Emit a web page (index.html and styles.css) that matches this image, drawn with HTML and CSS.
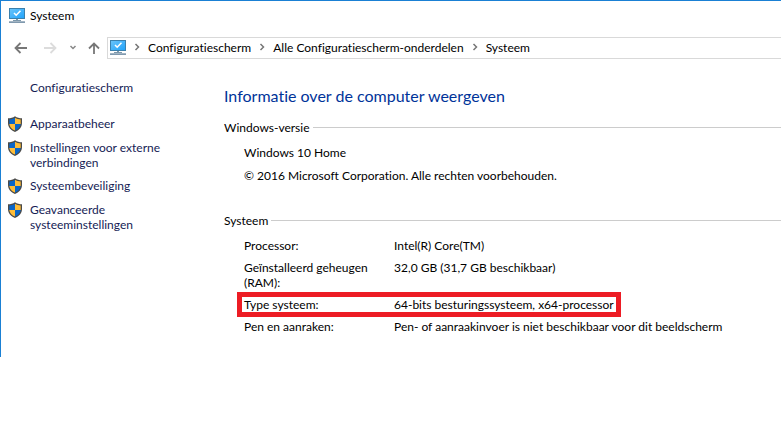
FILE: index.html
```html
<!DOCTYPE html>
<html lang="nl">
<head>
<meta charset="utf-8">
<title>Systeem</title>
<link rel="stylesheet" href="styles.css">
</head>
<body>
<svg class="defs" aria-hidden="true">
  <defs>
    <linearGradient id="screen" x1="0" y1="0" x2="1" y2="1">
      <stop offset="0" stop-color="#6cc5fa"/>
      <stop offset="1" stop-color="#1ea2fb"/>
    </linearGradient>
    <symbol id="monitor" viewBox="0 0 16 15">
      <rect x=".5" y=".5" width="15" height="10" fill="url(#screen)" stroke="#3a80ad"/>
      <path d="M5 5l2.200 2.200L11.500 2.800" fill="none" stroke="#fff" stroke-width="1.600"/>
      <path d="M7 11h2v1h3v1H4v-1h3z" fill="#7c97aa"/>
      <path d="M0 13.500h16" stroke="#a3b5c4" stroke-width="1"/>
      <path d="M0 14.500h16" stroke="#8099ae" stroke-width="1"/>
    </symbol>
    <symbol id="shield" viewBox="0 0 14 16">
      <path d="M7 .2C5 1.600 2.700 2.200 0 2.200V7c0 4.200 2.900 7.200 7 8.900 4.100-1.700 7-4.700 7-8.900V2.200C11.300 2.200 9 1.600 7 .2z" fill="#4a4a48"/>
      <path d="M7 1.800C5.300 2.800 3.400 3.300 1.300 3.400V8H7z" fill="#0a66c8"/>
      <path d="M7 1.800c1.700 1 3.600 1.500 5.700 1.600V8H7z" fill="#ffbd38"/>
      <path d="M1.300 8c.3 3 2.500 5.200 5.700 6.600V8z" fill="#ffbd38"/>
      <path d="M12.700 8c-.3 3-2.500 5.200-5.700 6.600V8z" fill="#0a66c8"/>
    </symbol>
    <symbol id="chevron" viewBox="0 0 6 8">
      <path d="M1.500 1l3 3-3 3" fill="none" stroke="#777" stroke-width="1.500"/>
    </symbol>
  </defs>
</svg>
<div class="window">
  <header class="titlebar">
    <svg class="monitor" aria-hidden="true"><use href="#monitor"/></svg>
    <span>Systeem</span>
  </header>
  <div class="toolbar">
    <div class="nav">
      <button class="nav-button" aria-label="Vorige">
        <svg width="14" height="12" viewBox="0 0 14 12"><path d="M13 6H2M6.500 1L1.500 6l5 5" fill="none" stroke="#777" stroke-width="1.800"/></svg>
      </button>
      <button class="nav-button" aria-label="Volgende" disabled>
        <svg width="14" height="12" viewBox="0 0 14 12"><path d="M0 6h11M6.500 1l5 5-5 5" fill="none" stroke="#dcdcdc" stroke-width="1.800"/></svg>
      </button>
      <button class="nav-button history" aria-label="Recente locaties">
        <svg width="8" height="6" viewBox="0 0 8 6"><path d="M1.500 1l2.500 2.500L6.500 1" fill="none" stroke="#888" stroke-width="1.500"/></svg>
      </button>
      <button class="nav-button" aria-label="Omhoog">
        <svg width="12" height="12" viewBox="0 0 12 12"><path d="M6 12V1.500M1 6.500l5-5 5 5" fill="none" stroke="#777" stroke-width="1.800"/></svg>
      </button>
    </div>
    <nav class="address" aria-label="Adres">
      <svg class="monitor" aria-hidden="true"><use href="#monitor"/></svg>
      <svg class="chevron" aria-hidden="true"><use href="#chevron"/></svg>
      <a href="#">Configuratiescherm</a>
      <svg class="chevron" aria-hidden="true"><use href="#chevron"/></svg>
      <a href="#">Alle Configuratiescherm-onderdelen</a>
      <svg class="chevron" aria-hidden="true"><use href="#chevron"/></svg>
      <a href="#">Systeem</a>
    </nav>
  </div>
  <div class="body">
    <aside class="sidebar">
      <a class="home" href="#">Configuratiescherm</a>
      <ul class="tasks">
        <li><a href="#"><svg class="shield" aria-hidden="true"><use href="#shield"/></svg><span>Apparaatbeheer</span></a></li>
        <li><a href="#"><svg class="shield" aria-hidden="true"><use href="#shield"/></svg><span>Instellingen voor externe verbindingen</span></a></li>
        <li><a href="#"><svg class="shield" aria-hidden="true"><use href="#shield"/></svg><span>Systeembeveiliging</span></a></li>
        <li><a href="#"><svg class="shield" aria-hidden="true"><use href="#shield"/></svg><span>Geavanceerde systeeminstellingen</span></a></li>
      </ul>
    </aside>
    <main class="content">
      <h1>Informatie over de computer weergeven</h1>
      <section>
        <h2>Windows-versie</h2>
        <div class="details edition">
          <p>Windows 10 Home</p>
          <p>© 2016 Microsoft Corporation. Alle rechten voorbehouden.</p>
        </div>
      </section>
      <section>
        <h2>Systeem</h2>
        <dl class="details">
          <div class="row"><dt>Processor:</dt><dd>Intel(R) Core(TM)</dd></div>
          <div class="row"><dt>Geïnstalleerd geheugen (RAM):</dt><dd>32,0 GB (31,7 GB beschikbaar)</dd></div>
          <div class="row marked"><dt>Type systeem:</dt><dd>64-bits besturingssysteem, x64-processor</dd></div>
          <div class="row"><dt>Pen en aanraken:</dt><dd>Pen- of aanraakinvoer is niet beschikbaar voor dit beeldscherm</dd></div>
        </dl>
      </section>
    </main>
  </div>
</div>
</body>
</html>
```

FILE: styles.css
```css
* {
  box-sizing: border-box;
}

body {
  margin: 0;
  background: #fff;
  color: #000;
  font: 12px/15px Lato, "Open Sans", sans-serif;
  font-variant-ligatures: none;
}

a {
  color: inherit;
  text-decoration: none;
}

h1, h2, p, ul, dl, dd {
  margin: 0;
  padding: 0;
  font-weight: normal;
}

svg {
  display: block;
  flex: none;
}

.defs {
  position: absolute;
  width: 0;
  height: 0;
}

.window {
  border-top: 1px solid #1a80d4;
  border-left: 1px solid #1a80d4;
  padding-bottom: 23px;
}

.monitor {
  width: 16px;
  height: 15px;
}

.chevron {
  width: 6px;
  height: 8px;
}

.titlebar {
  display: flex;
  align-items: center;
  gap: 5px;
  padding: 7px 8px;
}

.toolbar {
  display: flex;
  align-items: center;
  margin-top: 7px;
}

.nav {
  display: flex;
  align-items: center;
  gap: 16px;
  padding: 0 7px 0 13px;
}

.nav-button {
  border: 0;
  padding: 0;
  background: none;
}

.history {
  margin: 0 -5px;
}

.address {
  flex: 1;
  display: flex;
  align-items: center;
  gap: 8px;
  height: 22px;
  padding: 0 2px 2px;
  border: 1px solid #d9d9d9;
  border-right: 0;
}

.body {
  display: flex;
  padding-top: 21px;
}

.sidebar {
  flex: none;
  width: 223px;
  padding-left: 7px;
  color: #151c55;
}

.home {
  display: block;
  padding-left: 22px;
}

.tasks {
  display: flex;
  flex-direction: column;
  gap: 8px;
  width: 160px;
  padding-top: 21px;
  list-style: none;
}

.tasks a {
  display: flex;
  gap: 8px;
}

.shield {
  width: 14px;
  height: 16px;
}

.content {
  flex: 1;
  padding-top: 6px;
}

h1 {
  color: #003399;
  font-size: 16px;
  line-height: 20px;
}

h2 {
  display: flex;
  align-items: center;
  gap: 3px;
  font-size: 12px;
}

h2::after {
  content: "";
  flex: 1;
  height: 1px;
  background: #ccc;
}

section {
  padding-top: 14px;
}

section + section {
  padding-top: 30px;
}

.details {
  display: flex;
  flex-direction: column;
  gap: 7px;
  padding: 10px 0 0 20px;
}

.edition {
  gap: 8px;
}

.row {
  display: flex;
}

dt {
  flex: none;
  width: 150px;
  padding-right: 20px;
}

.marked {
  width: fit-content;
  padding: 0 2px;
  margin-left: -2px;
  outline: 5px solid #ed1c24;
}
```
